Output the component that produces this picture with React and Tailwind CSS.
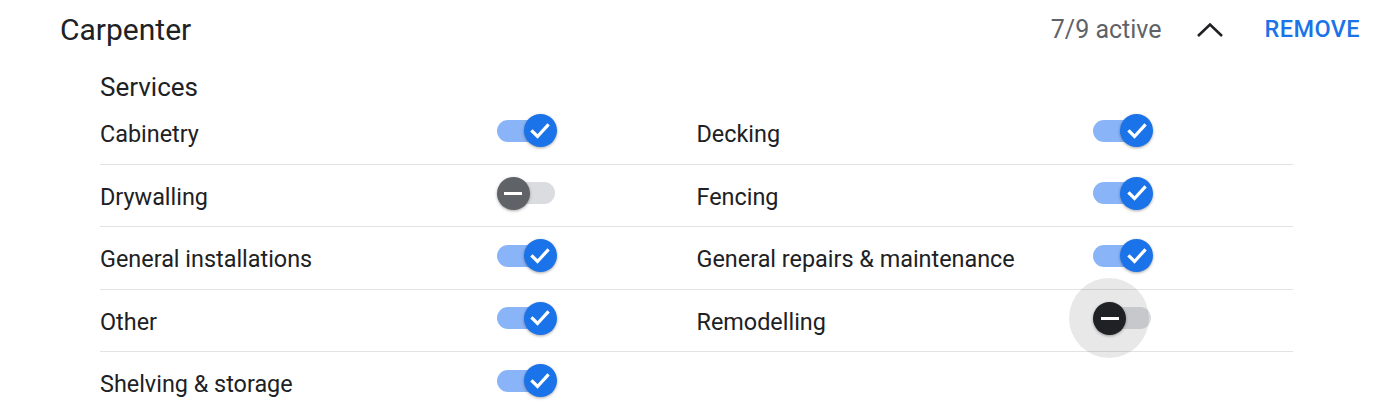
const services = [
  { name: "Cabinetry", on: true },
  { name: "Decking", on: true },
  { name: "Drywalling", on: false },
  { name: "Fencing", on: true },
  { name: "General installations", on: true },
  { name: "General repairs & maintenance", on: true },
  { name: "Other", on: true },
  { name: "Remodelling", on: false, focused: true },
  { name: "Shelving & storage", on: true },
];

function Switch({ on, focused }) {
  return (
    <div className="relative h-[33px] w-[60px] -translate-y-[2px]">
      <div
        className={
          "absolute left-0 right-[2px] top-[5.5px] h-[22px] rounded-full " +
          (on ? "bg-[#8ab4f8]" : "bg-[#dadce0]")
        }
      />
      {focused && (
        <div className="absolute left-[-24px] top-[-23.5px] h-[80px] w-[80px] rounded-full bg-black/[0.09]" />
      )}
      <div
        className={
          "absolute top-0 flex h-[33px] w-[33px] items-center justify-center rounded-full shadow-[0_1px_3px_rgba(0,0,0,0.35)] " +
          (on
            ? "right-0 bg-[#1a73e8]"
            : focused
            ? "left-0 bg-[#202124]"
            : "left-0 bg-[#5f6368]")
        }
      >
        {on ? (
          <svg width="24" height="24" viewBox="0 0 24 24">
            <path
              d="M4.5 12.5l5 5L19.5 6.5"
              fill="none"
              stroke="white"
              strokeWidth="3.2"
              strokeLinecap="square"
            />
          </svg>
        ) : (
          <div className="h-[3px] w-[18px] bg-white" />
        )}
      </div>
    </div>
  );
}

export default function App() {
  return (
    <div
      className="h-[412px] overflow-hidden bg-white pl-[60px] pr-[40px] text-[#202124]"
      style={{ fontFamily: "Roboto, 'Noto Sans', sans-serif" }}
    >
      <div className="flex h-[60px] items-center">
        <div className="flex-1 text-[30px] leading-none">Carpenter</div>
        <div className="text-[25px] text-[#5f6368]">7/9 active</div>
        <svg className="ml-[34px]" width="28" height="16" viewBox="0 0 28 16">
          <path d="M2 14L14 2.5L26 14" fill="none" stroke="#202124" strokeWidth="2.6" />
        </svg>
        <button className="ml-[41px] text-[23.5px] font-medium tracking-[0.4px] text-[#1a73e8]">
          REMOVE
        </button>
      </div>
      <div className="w-[1233px] pl-[40px]">
        <div className="pt-[13px] text-[26px] leading-[28px]">Services</div>
        <div className="mt-[1px] grid grid-cols-2">
          {services.map((s) => (
            <div
              key={s.name}
              className="flex h-[62.5px] items-center justify-between border-b border-[#e3e3e3] pr-[140px] text-[23.4px]"
            >
              <span className="translate-y-[2px]">{s.name}</span>
              <Switch on={s.on} focused={s.focused} />
            </div>
          ))}
        </div>
      </div>
    </div>
  );
}
